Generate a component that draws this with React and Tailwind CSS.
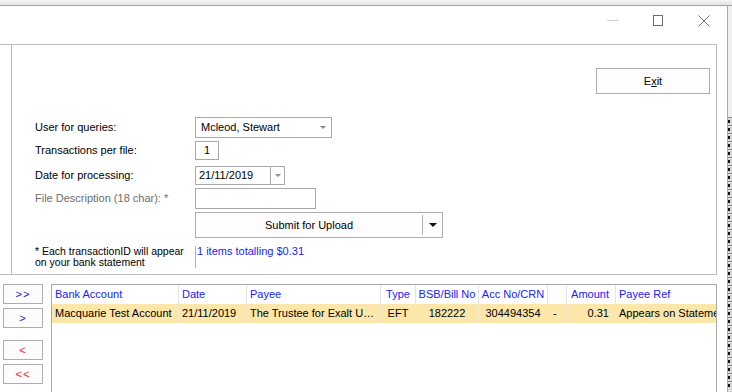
import React from 'react'

const COLS = [
  { key: 'bank', label: 'Bank Account', w: 'w-[127px]', align: 'text-left pl-[3px]', value: 'Macquarie Test Account' },
  { key: 'date', label: 'Date', w: 'w-[68px]', align: 'text-left pl-[3px]', value: '21/11/2019' },
  { key: 'payee', label: 'Payee', w: 'w-[134px]', align: 'text-left pl-[3px]', value: 'The Trustee for Exalt Unit Trust' },
  { key: 'type', label: 'Type', w: 'w-[35px]', align: 'text-center', value: 'EFT' },
  { key: 'bsb', label: 'BSB/Bill No', w: 'w-[63px]', align: 'text-center', value: '182222' },
  { key: 'acc', label: 'Acc No/CRN', w: 'w-[69px]', align: 'text-center', value: '304494354' },
  { key: 'flag', label: '', w: 'w-[19px]', align: 'text-left pl-[5px]', value: '-' },
  { key: 'amt', label: 'Amount', w: 'w-[49px]', align: 'text-right pr-[6px]', value: '0.31' },
  { key: 'ref', label: 'Payee Ref', w: 'flex-1', align: 'text-left pl-[3px]', value: 'Appears on Statement', last: true },
]

function SmallArrow({ color = '#8a8a8a', w = 7, h = 4 }) {
  return (
    <svg width={w} height={h} viewBox={`0 0 ${w} ${h}`}>
      <polygon points={`0,0 ${w},0 ${w / 2},${h}`} fill={color} />
    </svg>
  )
}

function FormRow({ label, gray, h, mt, children }) {
  return (
    <div className={`flex items-center ${h} ${mt}`}>
      <div className={`w-[160px] pl-[23px] box-content ${gray ? 'text-[#6d6d6d]' : 'text-black'}`}>{label}</div>
      {children}
    </div>
  )
}

function MoveBtn({ children, red, mt }) {
  return (
    <button className={`w-[40px] h-[20px] ml-[3px] ${mt} border border-[#adadad] bg-[#fcfcfc] text-[11px] leading-none tracking-[1px] ${red ? 'text-[#ff1a1a]' : 'text-[#2222ff]'}`}>
      {children}
    </button>
  )
}

export default function App() {
  return (
    <div className="w-[732px] h-[392px] overflow-hidden bg-[#f0f0f0] flex flex-col text-[11px] text-black" style={{ fontFamily: '"Liberation Sans", Arial, sans-serif' }}>
      <div className="h-[6px] shrink-0 border-b border-[#a3a3a3] bg-linear-to-b from-[#f6f6f6] to-[#e2e2e2]" />
      <div className="flex flex-1 min-h-0">
        {/* window */}
        <div className="w-[728px] bg-white border-r border-[#a8a8a8] flex flex-col">
          {/* title bar */}
          <div className="h-[38px] shrink-0 flex justify-end items-start">
            <div className="w-[46px] h-[29px] flex items-center justify-center">
              <div className="w-[11px] h-px bg-[#cfcfcf]" />
            </div>
            <div className="w-[46px] h-[29px] flex items-center justify-center">
              <div className="w-[10px] h-[11px] border border-[#6e6e6e]" />
            </div>
            <div className="w-[46px] h-[29px] flex items-center justify-center">
              <svg width="12" height="12" viewBox="0 0 12 12">
                <path d="M0.5 0.5 L11.5 11.5 M11.5 0.5 L0.5 11.5" stroke="#6e6e6e" strokeWidth="1" fill="none" />
              </svg>
            </div>
          </div>

          {/* top panel */}
          <div className="flex h-[231px] shrink-0">
            <div className="w-[12px] border-t border-b border-r border-[#bdbdbd]" />
            <div className="w-[705px] border-t border-b border-r border-[#bdbdbd] flex flex-col">
              <div className="flex justify-end pr-[6px] pt-[23px]">
                <button className="w-[114px] h-[26px] border border-[#adadad] bg-[#fdfdfd] text-[11px]">
                  E<span className="underline">x</span>it
                </button>
              </div>

              <FormRow label="User for queries:" h="h-[21px]" mt="mt-[23px]">
                <div className="w-[137px] h-[21px] border border-[#a9a9a9] flex items-center pl-[5px] pr-[5px]">
                  <span className="flex-1">Mcleod, Stewart</span>
                  <SmallArrow w={6} h={3} />
                </div>
              </FormRow>

              <FormRow label="Transactions per file:" h="h-[19px]" mt="mt-[3px]">
                <div className="w-[24px] h-[19px] border border-[#a9a9a9] flex items-center justify-center">1</div>
              </FormRow>

              <FormRow label="Date for processing:" h="h-[19px]" mt="mt-[6px]">
                <div className="w-[90px] h-[19px] border border-[#a9a9a9] flex items-center">
                  <span className="flex-1 pl-[3px]">21/11/2019</span>
                  <div className="w-[14px] h-full border-l border-[#a9a9a9] flex items-center justify-center">
                    <SmallArrow w={6} h={3} />
                  </div>
                </div>
              </FormRow>

              <FormRow label="File Description (18 char): *" gray h="h-[21px]" mt="mt-[3px]">
                <div className="w-[121px] h-[21px] border border-[#a9a9a9]" />
              </FormRow>

              <div className="flex mt-[3px] pl-[183px]">
                <div className="w-[248px] h-[26px] border border-[#adadad] bg-[#fdfdfd] flex items-center">
                  <span className="flex-1 text-center">Submit for Upload</span>
                  <div className="w-[20px] h-[20px] border-l border-[#adadad] flex items-center justify-center">
                    <SmallArrow color="#111" w={8} h={4} />
                  </div>
                </div>
              </div>

              <div className="flex mt-[8px] leading-[11px]">
                <div className="w-[160px] pl-[23px] box-content text-[10.5px]">
                  <div>* Each transactionID will appear</div>
                  <div>on your bank statement</div>
                </div>
                <div className="text-[#1c1cff] border-l border-[#ff7cff] pl-px">1 items totalling $0.31</div>
              </div>
            </div>
          </div>

          {/* bottom area */}
          <div className="flex flex-1 min-h-0 pt-[9px]">
            <div className="w-[51px] flex flex-col shrink-0">
              <MoveBtn>&gt;&gt;</MoveBtn>
              <MoveBtn mt="mt-[4px]">&gt;</MoveBtn>
              <MoveBtn red mt="mt-[12px]">&lt;</MoveBtn>
              <MoveBtn red mt="mt-[4px]">&lt;&lt;</MoveBtn>
            </div>
            <div className="w-[666px] border-t border-l border-r border-[#a9a9a9] flex flex-col">
              <div className="flex h-[19px]">
                {COLS.map(c => (
                  <div key={c.key} className={`${c.w} shrink-0 h-full flex items-center ${c.last ? '' : 'border-r border-[#e3e3e3]'} text-[#2020ff] whitespace-nowrap overflow-hidden`}>
                    <span className={`w-full ${c.align}`}>{c.label}</span>
                  </div>
                ))}
              </div>
              <div className="flex h-[19px] bg-[#fde6a9]">
                {COLS.map(c => (
                  <div key={c.key} className={`${c.w} shrink-0 h-full flex items-center ${c.last ? '' : 'border-r border-[#f3e9cf]'} whitespace-nowrap overflow-hidden min-w-0`}>
                    <span className={`w-full block overflow-hidden ${c.key === 'payee' ? 'text-ellipsis' : 'text-clip'} ${c.align}`}>{c.value}</span>
                  </div>
                ))}
              </div>
            </div>
          </div>
        </div>

        {/* strip of window behind */}
        <div className="w-[4px] flex flex-col">
          <div className="h-[111px] shrink-0" />
          <div className="flex-1 flex flex-col bg-[#d9d9d9]">
            {Array.from({ length: 34 }).map((_, i) => (
              <div key={i} className="h-[8px] shrink-0 border-t border-[#8e8e8e] flex items-center">
                <div className="w-[2px] h-[3px] bg-[#111]" />
              </div>
            ))}
          </div>
        </div>
      </div>
    </div>
  )
}
